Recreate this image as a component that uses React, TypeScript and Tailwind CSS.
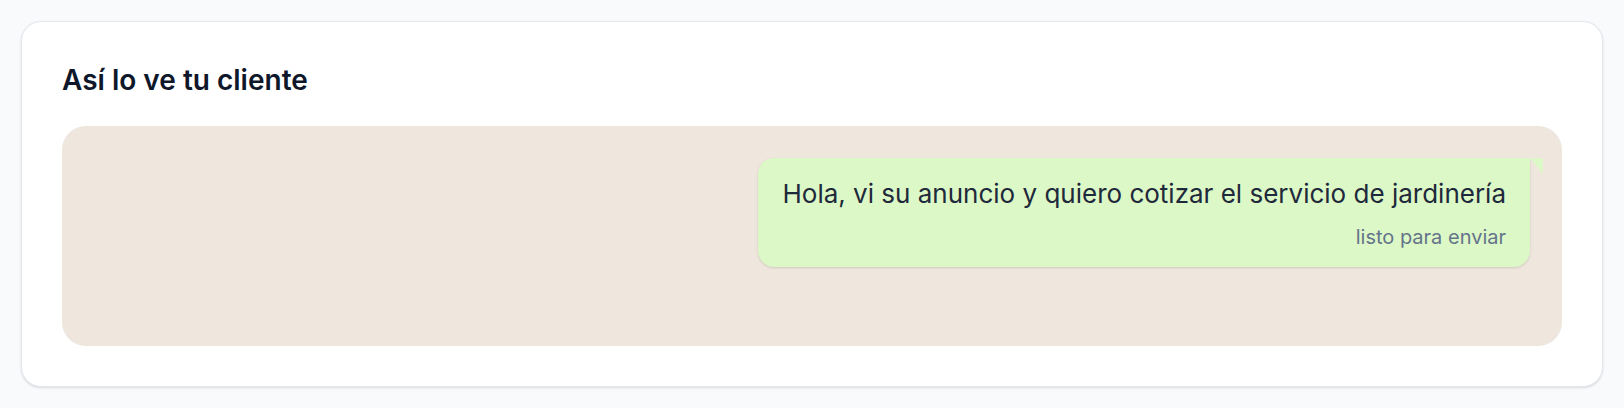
export default function App() {
  return (
    <div className="min-h-screen bg-[#f8fafc] p-[21px]" style={{ fontFamily: 'Inter, "Noto Sans", sans-serif' }}>
      <div className="rounded-[20px] border border-[#e2e8f0] bg-white px-10 pb-10 pt-10 shadow-sm">
        <h2 className="mb-7 text-[28px] leading-9 font-semibold text-[#0f172a]">Así lo ve tu cliente</h2>
        <div className="flex h-[220px] items-start justify-end rounded-3xl bg-[#efe6dd] p-8">
          <div className="relative rounded-2xl rounded-tr-none bg-[#dcf8c6] px-6 pt-4 pb-4 shadow-sm">
            <div className="absolute top-0 right-[-13px] h-0 w-0 border-t-[16px] border-l-[13px] border-t-[#dcf8c6] border-l-transparent" />
            <p className="text-[26px] leading-[39px] text-[#1e293b]">
              Hola, vi su anuncio y quiero cotizar el servicio de jardinería
            </p>
            <p className="mt-[10px] text-right text-[20px] leading-7 text-[#64748b]">listo para enviar</p>
          </div>
        </div>
      </div>
    </div>
  );
}
